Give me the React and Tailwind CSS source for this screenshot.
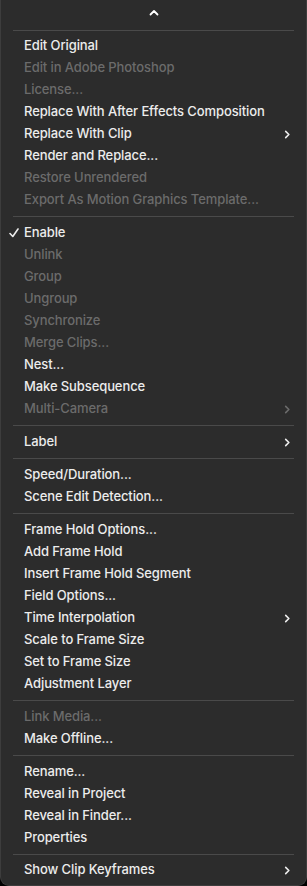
import React from 'react';

const menu = [
  [
    { label: 'Edit Original' },
    { label: 'Edit in Adobe Photoshop', off: true },
    { label: 'License...', off: true },
    { label: 'Replace With After Effects Composition' },
    { label: 'Replace With Clip', sub: true },
    { label: 'Render and Replace...' },
    { label: 'Restore Unrendered', off: true },
    { label: 'Export As Motion Graphics Template...', off: true },
  ],
  [
    { label: 'Enable', checked: true },
    { label: 'Unlink', off: true },
    { label: 'Group', off: true },
    { label: 'Ungroup', off: true },
    { label: 'Synchronize', off: true },
    { label: 'Merge Clips...', off: true },
    { label: 'Nest...' },
    { label: 'Make Subsequence' },
    { label: 'Multi-Camera', off: true, sub: true },
  ],
  [{ label: 'Label', sub: true }],
  [{ label: 'Speed/Duration...' }, { label: 'Scene Edit Detection...' }],
  [
    { label: 'Frame Hold Options...' },
    { label: 'Add Frame Hold' },
    { label: 'Insert Frame Hold Segment' },
    { label: 'Field Options...' },
    { label: 'Time Interpolation', sub: true },
    { label: 'Scale to Frame Size' },
    { label: 'Set to Frame Size' },
    { label: 'Adjustment Layer' },
  ],
  [{ label: 'Link Media...', off: true }, { label: 'Make Offline...' }],
  [
    { label: 'Rename...' },
    { label: 'Reveal in Project' },
    { label: 'Reveal in Finder...' },
    { label: 'Properties' },
  ],
  [{ label: 'Show Clip Keyframes', sub: true }],
];

const Chevron = ({ className, d }) => (
  <svg className={className} viewBox="0 0 10 10" fill="none" stroke="currentColor" strokeWidth="1.8" strokeLinecap="round" strokeLinejoin="round">
    <path d={d} />
  </svg>
);

const Separator = ({ tight }) => (
  <div className={tight ? 'pt-[5px] pb-[4px] px-3' : 'py-[5px] px-3'}>
    <div className="h-px bg-[#4a4a4a]" />
  </div>
);

const Item = ({ item }) => (
  <div className={`relative h-[22px] flex items-center pl-[23px] pr-[14px] ${item.off ? 'text-[#6b6b6b]' : 'text-[#ececec]'}`}>
    {item.checked && (
      <svg className="absolute left-[8px] top-[6px] w-[10px] h-[10px]" viewBox="0 0 10 10" fill="none" stroke="currentColor" strokeWidth="1.6" strokeLinecap="round" strokeLinejoin="round">
        <path d="M1 5.5 L3.8 8.5 L9 1" />
      </svg>
    )}
    <span className="flex-1 truncate">{item.label}</span>
    {item.sub && <Chevron className="w-[9px] h-[9px]" d="M3 1.5 L6.5 5 L3 8.5" />}
  </div>
);

export default function App() {
  return (
    <div className="w-[307px] h-[886px] bg-black">
      <div
        className="w-full h-full bg-[#2c2c2c] rounded-b-[9px] border border-[#3d3d3d] border-t-0 text-[13px] font-medium tracking-[-0.1px] select-none"
        style={{ fontFamily: 'Inter, "Noto Sans", "Liberation Sans", sans-serif' }}
      >
        <div className="h-[25px] flex items-center justify-center text-white">
          <Chevron className="w-[10px] h-[10px]" d="M1.5 6.5 L5 3 L8.5 6.5" />
        </div>
        <Separator tight />
        {menu.map((group, i) => (
          <React.Fragment key={i}>
            {i > 0 && <Separator tight={i === 7} />}
            {group.map((item) => (
              <Item key={item.label} item={item} />
            ))}
          </React.Fragment>
        ))}
      </div>
    </div>
  );
}
